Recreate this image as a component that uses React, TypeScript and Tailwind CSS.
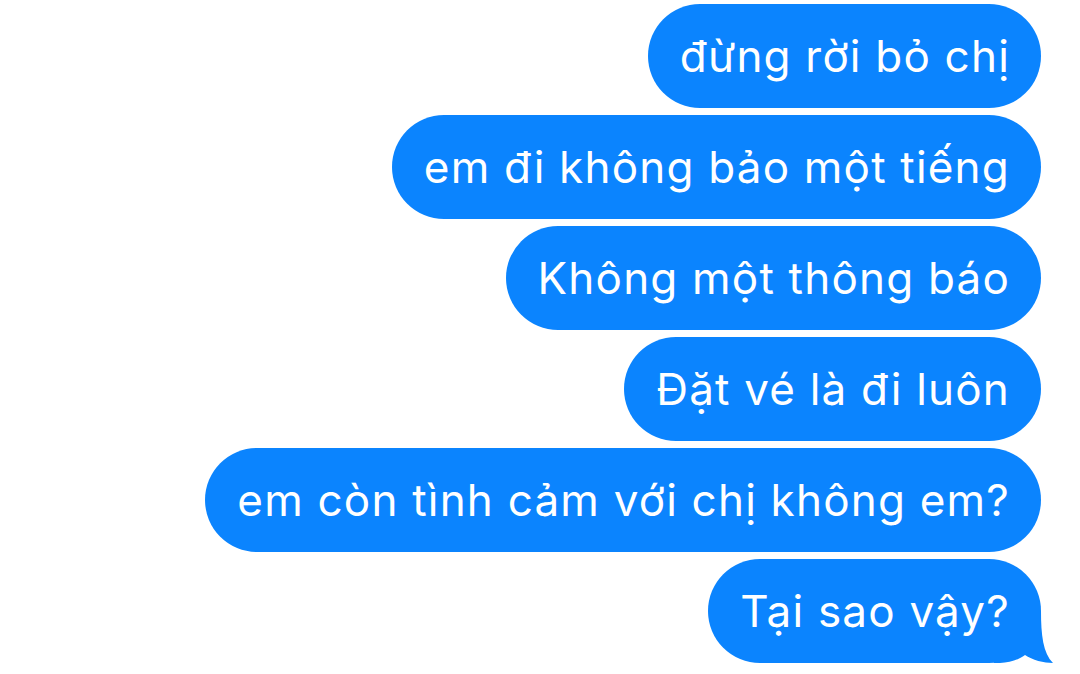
import React from "react";

const msgs = [
  "đừng rời bỏ chị",
  "em đi không bảo một tiếng",
  "Không một thông báo",
  "Đặt vé là đi luôn",
  "em còn tình cảm với chị không em?",
  "Tại sao vậy?",
];

export default function App() {
  return (
    <div className="w-[1080px] h-[674px] bg-white overflow-hidden flex flex-col items-end gap-[7px] pt-[4px] pr-[39px]" style={{ fontFamily: "Inter, 'Noto Sans', sans-serif" }}>
      {msgs.map((m, i) => (
        <div key={i} className="relative h-[104px] rounded-[52px] bg-[#0b84fe] text-white text-[44px] leading-[104px] pl-[32px] pr-[31px] tracking-[1.2px] whitespace-nowrap">
          <span className="relative z-10">{m}</span>
          {i === msgs.length - 1 && (
            <svg className="absolute right-[-13px] bottom-0" width="60" height="52" viewBox="0 0 60 52">
              <path d="M0 0 H47 C47 24 49 42 59 52 C50 52 38 49 31 44 C26 48 16 52 6 52 H0 Z" fill="#0b84fe" />
            </svg>
          )}
        </div>
      ))}
    </div>
  );
}
